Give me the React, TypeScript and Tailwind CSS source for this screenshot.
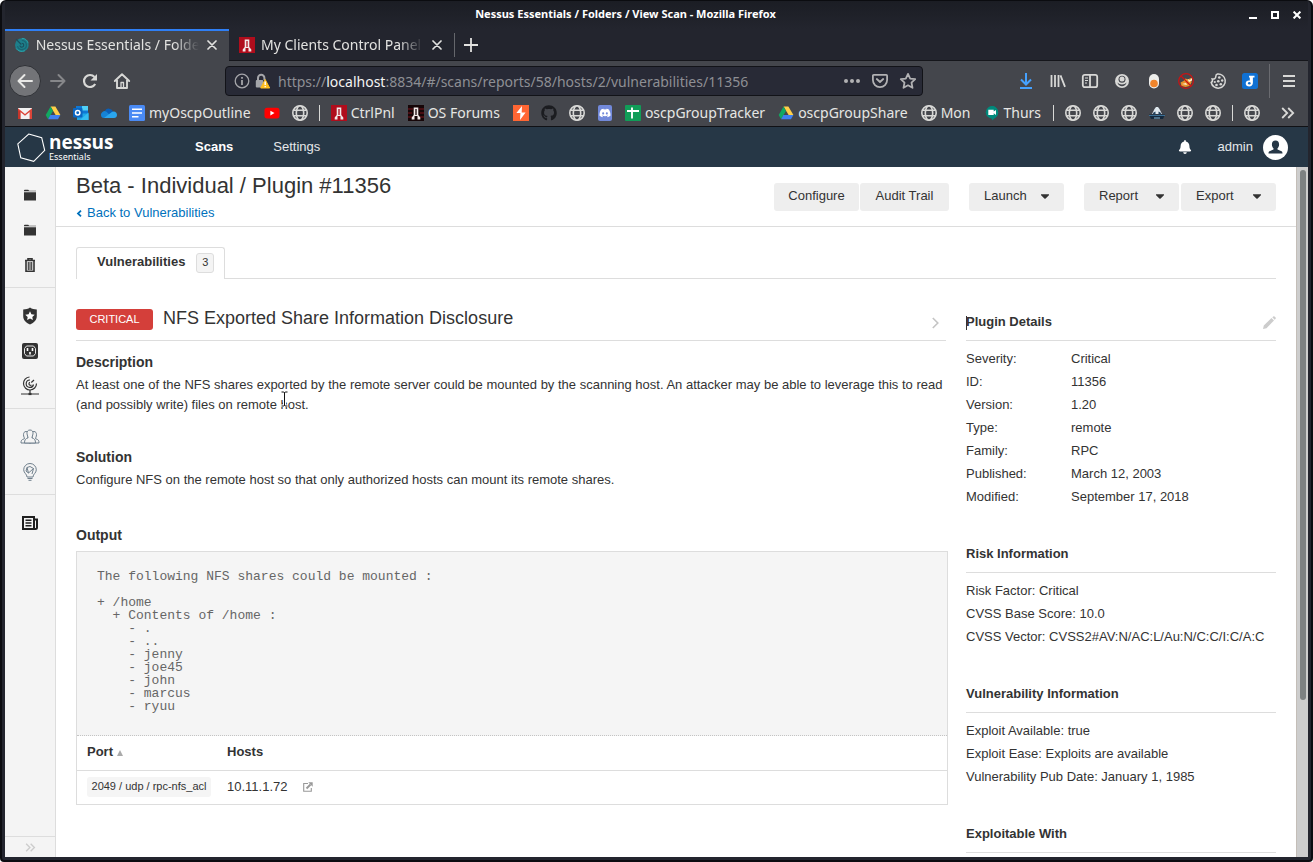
import React from "react";
import { FaCaretDown, FaGithub, FaDiscord, FaBell } from "react-icons/fa";

type IconProps = { className?: string };

/* ---------- browser icons ---------- */

const Globe = () => (
  <svg viewBox="0 0 16 16" className="size-4" fill="none" stroke="#d8d8d6" strokeWidth="1.6">
    <circle cx="8" cy="8" r="7.200" />
    <ellipse cx="8" cy="8" rx="3.700" ry="7.200" />
    <path d="M1.600 5.200h12.800M1.600 10.800h12.800" />
  </svg>
);

const Gmail = () => (
  <svg viewBox="0 0 16 16" className="size-4">
    <path d="M1 3h14v11H1z" fill="#f2f2f2" />
    <path d="M1 14V3.200L8 9l7-5.800V14h-2.400V7L8 10.800 3.400 7v7z" fill="#dc4539" />
    <path d="M3.400 14V7L1 5v9z" fill="#c5352b" />
  </svg>
);

const Drive = () => (
  <svg viewBox="0 0 16 16" className="size-4">
    <path d="M5.600 1.600h4.800l5 8.300h-4.800z" fill="#ffcf48" />
    <path d="M5.600 1.600L.7 9.900l2.400 4.300L8 5.900z" fill="#11a861" />
    <path d="M5.400 9.900h10l-2.400 4.300H3.100z" fill="#3f80ee" />
  </svg>
);

const Outlook = () => (
  <svg viewBox="0 0 16 16" className="size-4">
    <path d="M3 1h12v9H3z" fill="#0f78d4" />
    <path d="M9 1h6v4.500H9z" fill="#50d0f7" />
    <path d="M4 8.500h11.500V15H4z" fill="#1fa7e8" />
    <path d="M15.500 7.500V15H7z" fill="#33bdf2" />
    <rect x="0" y="3" width="9.500" height="9.500" rx="1" fill="#0a66c2" />
    <circle cx="4.700" cy="7.800" r="2.200" fill="none" stroke="#fff" strokeWidth="1.500" />
  </svg>
);

const OneDrive = () => (
  <svg viewBox="0 0 16 16" className="size-4">
    <path d="M3.800 6a4.600 4.600 0 0 1 8.400.8L8 10z" fill="#0a5fb8" />
    <path d="M0 10a3.600 3.600 0 0 1 5.500-3.300L12 13H3.300A3.100 3.100 0 0 1 0 10z" fill="#1583d6" />
    <path d="M3 13l7.500-5.800A3.400 3.400 0 0 1 16 10c0 1.800-1.300 3-3 3z" fill="#2aa6ee" />
  </svg>
);

const Docs = () => (
  <svg viewBox="0 0 16 16" className="size-4">
    <rect width="16" height="16" rx="1.500" fill="#4a8af4" />
    <path d="M3 4.200h10M3 8h10M3 11.800h6.500" stroke="#fff" strokeWidth="1.600" />
  </svg>
);

const YouTube = () => (
  <svg viewBox="0 0 16 16" className="size-4">
    <rect x="0.500" y="2.800" width="15" height="10.600" rx="2.600" fill="#f00" />
    <path d="M6.400 5.700v4.800L10.500 8.100z" fill="#fff" />
  </svg>
);

const Tower = ({ dark }: { dark?: boolean }) => (
  <svg viewBox="0 0 16 16" className="size-4">
    <rect width="16" height="16" fill={dark ? "#160608" : "#b00d1c"} />
    {dark && <path d="M0 4h5M11 4h5M0 8h4M12 8h4M0 12h4M12 12h4" stroke="#5a1016" strokeWidth="1.500" />}
    <path d="M5.700 2.500h4.600v7.500l2 2.500v2H9.500v-3.500h-3v3.500H3.700v-2l2-2.500z" fill="#f3eaea" />
    <path d="M8 4v6" stroke={dark ? "#160608" : "#b00d1c"} strokeWidth="1.300" />
  </svg>
);

const Burp = () => (
  <svg viewBox="0 0 16 16" className="size-4">
    <rect width="16" height="16" fill="#ff6633" />
    <path d="M9 1L3.400 8h4L7 15l5.600-7.500H8.700z" fill="#fff" />
  </svg>
);

const Sheets = () => (
  <svg viewBox="0 0 16 16" className="size-4">
    <rect width="16" height="16" rx="1" fill="#109d58" />
    <path d="M2 6h12M7 2.500v11" stroke="#fff" strokeWidth="1.900" />
  </svg>
);

const Discord = () => (
  <span className="flex size-4 items-center justify-center">
    <span className="flex h-4 w-3.5 items-center justify-center rounded-xs bg-[#7289da]">
      <FaDiscord className="size-3 text-white" />
    </span>
  </span>
);

const Meet = () => (
  <svg viewBox="0 0 16 16" className="size-4">
    <path d="M8 1a6.500 6.500 0 0 1 6.200 6.600c0 3.500-3 5.400-6.200 7.900v-2A6.400 6.400 0 0 1 8 1z" fill="#00897b" />
    <circle cx="8" cy="7.300" r="6.200" fill="#00897b" />
    <path d="M4.300 4.800h5.400v1.700L12 4.900v5L9.700 8.300V10H4.300z" fill="#fff" />
  </svg>
);

const Station = () => (
  <svg viewBox="0 0 16 16" className="size-4">
    <path d="M0 9.500h16l-2 4.500H2z" fill="#15293d" />
    <path d="M5.500 4l1.500-2h2l1.500 2 2.500 5H3z" fill="#dfe8ee" />
    <path d="M4.500 7.500l2-1v3h-3zM11.500 7.500l-2-1v3h3z" fill="#23415c" />
    <path d="M0 10.500h16" stroke="#3c6f94" strokeWidth="1.200" />
    <path d="M5 13h6" stroke="#86b7d4" />
  </svg>
);

const CloseX = ({ className }: IconProps) => (
  <svg viewBox="0 0 10 10" className={className} fill="none" stroke="currentColor" strokeWidth="1.700" strokeLinecap="round">
    <path d="M1 1l8 8M9 1L1 9" />
  </svg>
);

const Chevrons = ({ className }: IconProps) => (
  <svg viewBox="0 0 14 12" className={className} fill="none" stroke="currentColor" strokeWidth="1.800">
    <path d="M1.200 1l5 5-5 5M7.200 1l5 5-5 5" />
  </svg>
);

const Swirl = () => (
  <svg viewBox="0 0 16 16" className="size-4" fill="none">
    <circle cx="8" cy="8" r="7" fill="#1d7f8b" />
    <path d="M8 3.400a4.600 4.600 0 1 1-4.400 5.800" stroke="#1a6472" strokeWidth="1.200" />
    <path d="M7.500 7.500L2 2M6 8.500a2 2 0 1 0 2-2.300" stroke="#1b4f5d" strokeWidth="1.200" />
    <path d="M2.200 11.500a6.800 6.800 0 0 0 9 2.300M8 1.200a6.800 6.800 0 0 1 6.500 5" stroke="#29a3a9" strokeWidth="1" />
  </svg>
);

/* ---------- browser chrome ---------- */

function TitleBar() {
  return (
    <header className="relative flex h-[28px] shrink-0 items-center justify-center bg-linear-to-b from-[#1b1d24] to-[#23252e]">
      <h1 className="mr-[62px] pb-[2px] text-[11px] font-bold leading-4 text-white">
        Nessus Essentials / Folders / View Scan - Mozilla Firefox
      </h1>
      <div className="absolute right-[3px] top-0 flex h-full items-center gap-[6px] text-white">
        <button aria-label="Minimize" className="flex size-4 items-center justify-center">
          <svg viewBox="0 0 8 8" className="size-2"><path d="M0 6h8v2H0z" fill="currentColor" /></svg>
        </button>
        <button aria-label="Maximize" className="flex size-4 items-center justify-center">
          <svg viewBox="0 0 8 8" className="size-2"><path d="M1 1h6v6H1z" fill="none" stroke="currentColor" strokeWidth="2" /></svg>
        </button>
        <button aria-label="Close" className="flex size-4 items-center justify-center">
          <svg viewBox="0 0 8 8" className="size-2"><path d="M.6.6l6.800 6.800M7.400.6L.6 7.400" stroke="currentColor" strokeWidth="2" /></svg>
        </button>
      </div>
    </header>
  );
}

function TabStrip() {
  return (
    <div className="flex h-8 shrink-0 bg-[#23252e] text-[14px] leading-5 text-[#e2e2e0]">
      <div className="flex w-[224px] items-center border-t-2 border-[#2f7ff5] bg-[#44464c] pb-[2px] pl-[9px] pr-3">
        <Swirl />
        <span className="ml-[6px] w-[167px] overflow-hidden whitespace-nowrap mask-r-from-85%">
          Nessus Essentials / Folders
        </span>
        <button aria-label="Close tab" className="ml-2"><CloseX className="size-[10px]" /></button>
      </div>
      <div className="flex w-[225px] items-center border-b border-[#15161b] pl-[10px] pr-2">
        <Tower />
        <span className="ml-[6px] w-[162px] overflow-hidden whitespace-nowrap mask-r-from-85%">
          My Clients Control Panel
        </span>
        <button aria-label="Close tab" className="ml-[9px]"><CloseX className="size-[10px]" /></button>
      </div>
      <div className="flex flex-1 items-center border-b border-[#15161b]">
        <div className="h-6 w-px bg-[#65676c]" />
        <button aria-label="New tab" className="ml-[9px]">
          <svg viewBox="0 0 14 14" className="size-[14px]"><path d="M7 0v14M0 7h14" stroke="currentColor" strokeWidth="1.800" /></svg>
        </button>
      </div>
    </div>
  );
}

const navIcon = "size-4 overflow-visible";

function NavBar() {
  const tools: [string, React.ReactNode][] = [
    ["Downloads", (
      <svg viewBox="0 0 16 16" className={navIcon} fill="none" stroke="#45a1ff" strokeWidth="2">
        <path d="M8 0v11M3 6.500l5 5 5-5M2 15h12" />
      </svg>
    )],
    ["Library", (
      <svg viewBox="0 0 16 16" className={navIcon} fill="none" stroke="currentColor" strokeWidth="1.800">
        <path d="M1.500 2v12M5 2v12M8.500 2v12M10.500 2.400l4.500 11.400" />
      </svg>
    )],
    ["Sidebars", (
      <svg viewBox="0 0 16 16" className={navIcon} fill="none" stroke="currentColor" strokeWidth="1.800">
        <rect x="0.800" y="1.800" width="14.400" height="12.400" rx="2" />
        <path d="M8 2v12" /><path d="M3 5h3M3 7.500h3M3 10h2" strokeWidth="1.200" />
      </svg>
    )],
    ["Account", (
      <svg viewBox="0 0 16 16" className={navIcon}>
        <circle cx="8" cy="8" r="7" fill="currentColor" />
        <circle cx="8" cy="6.200" r="3.500" fill="#44464c" />
        <circle cx="8" cy="6" r="2.500" fill="currentColor" />
        <path d="M3.400 9.600c1.200 1.300 2.600 1.900 4.600 1.900s3.400-.6 4.600-1.900c-.8 2.500-2.500 3.700-4.600 3.700s-3.800-1.200-4.600-3.700z" fill="#44464c" />
      </svg>
    )],
    ["Proxy", (
      <svg viewBox="0 0 16 16" className={navIcon}>
        <rect x="3" y="1" width="10" height="14.500" rx="5" fill="#ededeb" />
        <circle cx="8" cy="10.500" r="3.800" fill="#f0852c" />
      </svg>
    )],
    ["Fox blocker", (
      <svg viewBox="0 0 16 16" className={navIcon}>
        <path d="M2.500 9.500l3-1.500 2-2.500 2.500 1 3.500-2v5l-2 3.500-4 1-4-1z" fill="#e8912b" />
        <path d="M9.500 6l2.500 1 2-2v2.500l-3 1.500zM4 11l4-1 1 2z" fill="#fff2d8" />
        <circle cx="8" cy="8" r="7.300" fill="none" stroke="#c81414" strokeWidth="1.300" />
        <path d="M3 3l10 10" stroke="#c81414" strokeWidth="1.300" />
      </svg>
    )],
    ["Cookies", (
      <svg viewBox="0 0 16 16" className={navIcon} fill="none" stroke="currentColor" strokeWidth="1.500">
        <path d="M7.500 1A7.100 7.100 0 1 1 1.200 9.500c1.500-.8 1.600-2 1-3.500 2 .3 3.600-.5 3.600-2.500 0-1 .5-2.200 1.700-2.500z" />
        <g fill="currentColor" stroke="none">
          <circle cx="4.800" cy="9" r="1.100" /><circle cx="9.300" cy="4.500" r="1.300" /><circle cx="12.200" cy="7.500" r="1.200" />
          <circle cx="8.300" cy="8.300" r="1.300" /><circle cx="6.500" cy="12" r="1.300" /><circle cx="10.800" cy="11.300" r="1.300" />
        </g>
      </svg>
    )],
    ["Joplin", (
      <svg viewBox="0 0 16 16" className={navIcon}>
        <rect width="16" height="16" rx="2.500" fill="#1071d3" />
        <path d="M7 2.700h5.500v1.800h-1.600v5.200c0 2.400-1.500 3.700-3.700 3.700-2.100 0-3.500-1.200-3.500-3 0-2.200 1.900-3.300 4.100-2.800V4.500H7z" fill="#fff" />
        <circle cx="7.300" cy="10.300" r="1.300" fill="#1071d3" />
      </svg>
    )],
  ];
  return (
    <div className="flex h-10 shrink-0 items-center bg-[#44464c] pl-1 pr-[3px] text-[#d8d8d6]">
      <button aria-label="Back" className="mr-px flex size-8 items-center justify-center rounded-full border border-[#2f3136] bg-[#737478] text-[#e8e8e6]">
        <svg viewBox="0 0 16 16" className={navIcon} fill="none" stroke="currentColor" strokeWidth="2" strokeLinecap="round" strokeLinejoin="round">
          <path d="M15 8H1.500M7.500 2l-6 6 6 6" />
        </svg>
      </button>
      <button aria-label="Forward" className="flex size-8 items-center justify-center text-[#86878a]">
        <svg viewBox="0 0 16 16" className={navIcon} fill="none" stroke="currentColor" strokeWidth="2" strokeLinecap="round" strokeLinejoin="round">
          <path d="M1 8h13.500M8.500 2l6 6-6 6" />
        </svg>
      </button>
      <button aria-label="Reload" className="flex size-8 items-center justify-center">
        <svg viewBox="0 0 16 16" className={navIcon} fill="none" stroke="currentColor" strokeWidth="2.200">
          <path d="M13.200 11A6 6 0 1 1 12.500 4" />
          <path d="M15 1v6.500H8.500z" fill="currentColor" stroke="none" />
        </svg>
      </button>
      <button aria-label="Home" className="flex size-8 items-center justify-center">
        <svg viewBox="0 0 16 16" className={navIcon} fill="none" stroke="currentColor" strokeWidth="1.900" strokeLinejoin="round">
          <path d="M.8 8L8 1.200 15.200 8M3 7v8h10V7" strokeLinecap="round" />
          <path d="M7 15V9.500h2.500V15" strokeWidth="1.300" />
        </svg>
      </button>
      <div className="mx-[87px] flex h-[30px] flex-1 items-center rounded-sm border border-[#121318] bg-[#282a36] px-2 text-[14px] text-[#8e8f94]">
        <svg viewBox="0 0 16 16" className="size-4 shrink-0" fill="none" stroke="#a4a5a9" strokeWidth="1.300">
          <circle cx="8" cy="8" r="6.800" /><path d="M8 7v5M8 4v1.800" strokeWidth="1.800" />
        </svg>
        <svg viewBox="0 0 16 16" className="ml-[5px] size-4 shrink-0 overflow-visible">
          <path d="M3 8V5a3.200 3.200 0 0 1 6.400 0v2" fill="none" stroke="#a4a5a9" strokeWidth="2" />
          <rect x="0.800" y="7" width="7.500" height="7.500" rx="1" fill="#a4a5a9" />
          <path d="M10.200 6.500l4.500 8.500h-9z" fill="#ffbf1f" stroke="#ffbf1f" strokeLinejoin="round" />
          <path d="M10.200 8.500v3.500M10.200 13v1.300" stroke="#fff" strokeWidth="1.400" />
        </svg>
        <p className="ml-[7px] flex-1 whitespace-nowrap">
          https://<span className="text-[#f4f4f2]">localhost</span>:8834/#/scans/reports/58/hosts/2/vulnerabilities/11356
        </p>
        <div className="flex items-center gap-3 text-[#b1b1b3]">
          <button aria-label="Page actions">
            <svg viewBox="0 0 16 16" className="size-4" fill="currentColor"><circle cx="2" cy="8" r="2" /><circle cx="8" cy="8" r="2" /><circle cx="14" cy="8" r="2" /></svg>
          </button>
          <button aria-label="Save to Pocket">
            <svg viewBox="0 0 16 16" className="size-4" fill="none" stroke="currentColor" strokeWidth="1.800" strokeLinecap="round" strokeLinejoin="round">
              <path d="M1.800 1.900h12.400c.6 0 .9.300.9.900V7a7.100 7.100 0 0 1-14.200 0V2.800c0-.6.3-.9.900-.9z" /><path d="M4.800 6L8 9l3.200-3" />
            </svg>
          </button>
          <button aria-label="Bookmark this page" className="-mr-[2px]">
            <svg viewBox="0 0 16 16" className="size-4 overflow-visible" fill="none" stroke="currentColor" strokeWidth="1.800" strokeLinejoin="round">
              <path d="M8 .9l2.200 4.700 5 .6-3.700 3.500 1 5.100L8 12.300l-4.500 2.500 1-5.100L.8 6.200l5-.6z" />
            </svg>
          </button>
        </div>
      </div>
      {tools.map(([label, icon]) => (
        <button key={label} aria-label={label} className="flex size-8 items-center justify-center">{icon}</button>
      ))}
      <div className="mx-[3px] h-[34px] w-px bg-[#6a6b70]" />
      <button aria-label="Open menu" className="flex size-8 items-center justify-center">
        <svg viewBox="0 0 16 16" className={navIcon} stroke="currentColor" strokeWidth="1.900"><path d="M2 3h12M2 8h12M2 13h12" /></svg>
      </button>
    </div>
  );
}

type Mark = { name: string; icon: React.ReactNode; text?: string } | "divider";

const bookmarks: Mark[] = [
  { name: "Gmail", icon: <Gmail /> },
  { name: "Drive", icon: <Drive /> },
  { name: "Outlook", icon: <Outlook /> },
  { name: "OneDrive", icon: <OneDrive /> },
  { name: "myOscpOutline", icon: <Docs />, text: "myOscpOutline" },
  { name: "YouTube", icon: <YouTube /> },
  { name: "Site", icon: <Globe /> },
  "divider",
  { name: "CtrlPnl", icon: <Tower />, text: "CtrlPnl" },
  { name: "OS Forums", icon: <Tower dark />, text: "OS Forums" },
  { name: "PortSwigger", icon: <Burp /> },
  { name: "GitHub", icon: <FaGithub className="size-4 text-[#1b1c20]" /> },
  { name: "Site", icon: <Globe /> },
  { name: "Discord", icon: <Discord /> },
  { name: "oscpGroupTracker", icon: <Sheets />, text: "oscpGroupTracker" },
  { name: "oscpGroupShare", icon: <Drive />, text: "oscpGroupShare" },
  { name: "Mon", icon: <Globe />, text: "Mon" },
  { name: "Thurs", icon: <Meet />, text: "Thurs" },
  "divider",
  { name: "Site", icon: <Globe /> },
  { name: "Site", icon: <Globe /> },
  { name: "Site", icon: <Globe /> },
  { name: "Station", icon: <Station /> },
  { name: "Site", icon: <Globe /> },
  { name: "Site", icon: <Globe /> },
  "divider",
  { name: "Site", icon: <Globe /> },
];

function BookmarksBar() {
  return (
    <nav className="flex h-[26px] shrink-0 items-center border-b border-[#101115] bg-[#44464c] pb-px pl-[6px] text-[14px] leading-5 text-[#e6e6e4]">
      {bookmarks.map((m, i) =>
        m === "divider" ? (
          <div key={i} className="mx-[5px] h-4 w-px shrink-0 bg-[#d8d8d6]" />
        ) : (
          <a key={i} href="#" aria-label={m.name} className={m.text ? "flex shrink-0 items-center gap-1 pl-[6px] pr-[7px]" : "flex shrink-0 px-[6px]"}>
            {m.icon}
            {m.text && <span className="whitespace-nowrap">{m.text}</span>}
          </a>
        )
      )}
      <button aria-label="More bookmarks" className="ml-auto mr-[13px] text-[#d8d8d6]">
        <Chevrons className="h-3 w-[14px]" />
      </button>
    </nav>
  );
}

/* ---------- application ---------- */

function AppHeader() {
  return (
    <header className="flex h-10 shrink-0 items-center bg-[#263746] pl-3 pr-5 text-[13px] text-[#e5e8ea]">
      <a href="#" className="flex w-[178px] items-center text-white">
        <svg viewBox="0 0 29 29" className="size-[29px]" fill="none" stroke="#fff" strokeWidth="1.100">
          <path d="M11.700 1l13 3.700 3 12.700-11 10.900-12.900-3.500L.8 10.900z" />
        </svg>
        <span className="ml-[3px] flex flex-col pt-px">
          <span className="font-['Open_Sans',sans-serif] text-[19px] font-bold leading-[18px]">nessus</span>
          <span className="font-['Noto_Sans',sans-serif] text-[9px] leading-3">Essentials</span>
        </span>
      </a>
      <a href="#" className="font-bold text-white">Scans</a>
      <a href="#" className="ml-10">Settings</a>
      <button aria-label="Notifications" className="ml-auto"><FaBell className="size-[14px] text-white" /></button>
      <button className="ml-[26px] flex items-center gap-[10px]">
        admin
        <svg viewBox="0 0 25 25" className="size-[25px]">
          <circle cx="12.500" cy="12.500" r="12.500" fill="#fff" />
          <path d="M12.500 5.500c2.300 0 3.600 1.600 3.600 3.900 0 1.800-.8 3-1.600 3.900v1.200l4 1.700c.7.300 1 1 1 2.300h-14c0-1.300.3-2 1-2.300l4-1.700v-1.200c-.8-.9-1.600-2.100-1.600-3.900 0-2.300 1.300-3.900 3.600-3.900z" fill="#263746" />
        </svg>
      </button>
    </header>
  );
}

const side = "size-[18px]";

const Folder = () => (
  <svg viewBox="0 0 18 18" className={side} fill="#333">
    <path d="M3 5V4.500C3 4 3.300 3.700 3.800 3.700h3.400l1 1H15V5.300H3zM3 6.200h12V14.600H3z" />
  </svg>
);

const sideGroups: [string, React.ReactNode][][] = [
  [
    ["My Scans", <Folder />],
    ["All Scans", <Folder />],
    ["Trash", (
      <svg viewBox="0 0 18 18" className={side} fill="none" stroke="#333" strokeWidth="1.600">
        <path d="M4 4.500h10M7 4V2.700h4V4M5 5v10.200h8V5" /><path d="M7.300 6v8M9 6v8M10.700 6v8" strokeWidth="1.100" />
      </svg>
    )],
  ],
  [
    ["Policies", (
      <svg viewBox="0 0 18 18" className={side}>
        <path d="M9 .5c2 1.400 4.200 1.900 6.800 2v6.600c0 4-2.600 6.800-6.800 8.500-4.200-1.700-6.800-4.500-6.800-8.500V2.500C4.800 2.400 7 1.900 9 .5z" fill="#333" />
        <path d="M9 4.300l1.400 3 3.300.4-2.400 2.200.6 3.200L9 11.500l-2.900 1.600.6-3.200-2.400-2.200 3.300-.4z" fill="#fff" />
      </svg>
    )],
    ["Plugin Rules", (
      <svg viewBox="0 0 18 18" className={side}>
        <rect x="1" y="1" width="16" height="16" rx="2" fill="#333" />
        <path d="M5.500 4h7l2 2.500v5l-2 2.500h-7l-2-2.500v-5z" fill="none" stroke="#e8e8e8" strokeWidth="1" />
        <path d="M6.500 6v3M11.500 6v3M9 10v2.500" stroke="#fff" strokeWidth="1.600" />
      </svg>
    )],
    ["Scanners", (
      <svg viewBox="0 0 18 18" className="size-[18px] overflow-visible" fill="none" stroke="#333" strokeWidth="1.200">
        <path d="M8.500 0a6.500 6.500 0 1 0 7 6.500M9 3a3.700 3.700 0 1 0 3.500 4.500" />
        <path d="M9 5.200A1.600 1.600 0 1 0 10.500 8M10.300 5.500L13 3" />
        <path d="M9 13v4M0 17h18" /><path d="M7.500 17h3" strokeWidth="2.200" />
      </svg>
    )],
  ],
  [
    ["Community", (
      <svg viewBox="0 0 18 18" className="size-[18px] overflow-visible" fill="#f4f4f4" stroke="#6f7f8c" strokeWidth="1">
        <path d="M5 3.500c2 0 2.800 1.500 2.600 3.200-.2 1.500-.8 2.300-.8 3.300l3 2v3H0c0-2.500.4-3.300 3.500-4.300 0-1-1-2-1-4 0-1.900.9-3.200 2.500-3.200z" />
        <path d="M13 3.500c-2 0-2.800 1.500-2.600 3.200.2 1.500.8 2.300.8 3.300l-3 2v3H18c0-2.500-.4-3.300-3.500-4.300 0-1 1-2 1-4 0-1.900-.9-3.200-2.500-3.200z" />
        <path d="M9 2c2.300 0 3.200 1.700 3 3.900-.1 1.800-1.100 2.500-1.100 3.900 2.800 1 3.600 2.200 3.600 5.200h-11c0-3 .8-4.200 3.600-5.200C7.100 8.400 6.100 7.700 6 5.900 5.800 3.700 6.700 2 9 2z" />
      </svg>
    )],
    ["Research", (
      <svg viewBox="0 0 18 18" className="size-[18px] overflow-visible" fill="none" stroke="#6f7f8c" strokeWidth="1">
        <path d="M9 .5a6.300 6.300 0 0 1 6.300 6.300c0 3.300-3.300 4.200-3.300 7.200H6c0-3-3.300-3.900-3.300-7.200A6.300 6.300 0 0 1 9 .5z" />
        <path d="M6.500 15.500h5M7.500 17.300h3M6 4.500l3-1 3.500 2-5 4.500zM6 4.500L5 8l2.500 2M12.500 5.500L11 11" />
      </svg>
    )],
  ],
  [
    ["News", (
      <svg viewBox="0 0 18 18" className={side} fill="none" stroke="#1f1f1f" strokeWidth="2">
        <path d="M2 3h11v12H2zM13.500 5.500H16v8c0 1-.5 1.500-1.500 1.500H3" /><path d="M4.500 6.200h6M4.500 9h6M4.500 11.800h6" strokeWidth="1.600" />
      </svg>
    )],
  ],
];

function Sidebar() {
  return (
    <aside className="flex w-[51px] shrink-0 flex-col border-r border-[#dddddd] bg-[#f4f4f4]">
      {sideGroups.map((g, i) => (
        <div key={i} className={i < 3 ? "border-b border-[#dddddd] pb-[5px] pt-[10px]" : "pt-[10px]"}>
          {g.map(([label, icon]) => (
            <a key={label} href="#" aria-label={label} className="flex h-[35px] items-center justify-center">{icon}</a>
          ))}
        </div>
      ))}
      <button aria-label="Expand" className="mt-auto flex h-[21px] items-center justify-center border-t border-[#dddddd] text-[#cccccc]">
        <Chevrons className="h-[9px] w-[11px]" />
      </button>
    </aside>
  );
}

const btn = "flex h-7 items-center rounded-[3px] bg-[#eeeeee] pb-[2px] text-[#333]";

function MenuButton({ label }: { label: string }) {
  return (
    <button className={`${btn} w-[95px] justify-between pl-[15px] pr-3`}>
      {label}
      <FaCaretDown className="size-[14px]" />
    </button>
  );
}

function PageHeader() {
  return (
    <div className="flex h-[60px] shrink-0 justify-between border-b border-[#dddddd] px-5">
      <div className="pt-[7px]">
        <h2 className="text-[22px] leading-6">Beta - Individual / Plugin #11356</h2>
        <a href="#" className="mt-[6px] flex items-center text-[#0071bc] leading-[18px]">
          <svg viewBox="0 0 6 7" className="mr-[5px] mt-px h-[7px] w-[6px]" fill="none" stroke="currentColor" strokeWidth="1.800"><path d="M5 .7L2 3.500l3 2.800" /></svg>
          Back to Vulnerabilities
        </a>
      </div>
      <div className="flex pt-4">
        <button className={`${btn} w-[85px] justify-center`}>Configure</button>
        <button className={`${btn} ml-px w-[89px] justify-center`}>Audit Trail</button>
        <div className="mx-5"><MenuButton label="Launch" /></div>
        <div className="flex gap-[2px]"><MenuButton label="Report" /><MenuButton label="Export" /></div>
      </div>
    </div>
  );
}

const output = `The following NFS shares could be mounted :

+ /home
  + Contents of /home :
    - .
    - ..
    - jenny
    - joe45
    - john
    - marcus
    - ryuu`;

function Finding() {
  return (
    <main className="min-w-0 flex-1">
      <div className="mr-[2px] flex h-8 items-start border-b border-[#dddddd]">
        <span className="flex h-[21px] w-[77px] items-center justify-center rounded-[3px] bg-[#d43f3a] pb-px text-[11px] leading-5 text-white">CRITICAL</span>
        <h3 className="ml-[10px] text-[18px] leading-[19px]">NFS Exported Share Information Disclosure</h3>
        <button aria-label="Next vulnerability" className="ml-auto mr-[7px] mt-2">
          <svg viewBox="0 0 7 12" className="h-3 w-[7px]" fill="none" stroke="#c4c4c4" strokeWidth="1.600"><path d="M.8 1l5 5-5 5" /></svg>
        </button>
      </div>
      <h4 className="mt-[11px] text-[14px] font-bold leading-5">Description</h4>
      <div className="relative mt-[3px]">
        <p className="leading-5">
          At least one of the NFS shares exported by the remote server could be mounted by the scanning host. An attacker may be able to leverage this to read (and possibly write) files on remote host.
        </p>
        <svg viewBox="0 0 7 16" className="absolute left-[205px] top-4 h-4 w-[7px]" fill="none">
          <path d="M0 1h7M0 15h7M3.500 1v14" stroke="#fff" strokeWidth="3" />
          <path d="M.5 1h2.300l.7.800.7-.8h2.300M.5 15h2.300l.7-.8.7.8h2.300M3.500 1.500v13" stroke="#111" strokeWidth="1" />
        </svg>
      </div>
      <h4 className="mt-8 text-[14px] font-bold leading-5">Solution</h4>
      <p className="mt-[3px] leading-5">
        Configure NFS on the remote host so that only authorized hosts can mount its remote shares.
      </p>
      <h4 className="mt-[35px] text-[14px] font-bold leading-5">Output</h4>
      <div className="mt-[6px] border border-[#dddddd]">
        <pre className="border-b border-dotted border-[#c4c4c4] bg-[#f5f5f5] pb-[22px] pl-5 pt-[18px] font-['Liberation_Mono',monospace] text-[13px] leading-[13px] text-[#666]">
          {output}
        </pre>
        <table className="w-full table-fixed border-collapse text-left">
          <colgroup><col className="w-[140px]" /><col /></colgroup>
          <thead>
            <tr className="h-[34px] border-b border-[#dddddd]">
              <th className="pb-px pl-[10px]">
                <span className="flex items-center gap-[4px]">
                  Port
                  <svg viewBox="0 0 6 6" className="mt-[2px] size-[6px]"><path d="M3 0l3 6H0z" fill="#aaa" /></svg>
                </span>
              </th>
              <th className="pb-px pl-[10px]">Hosts</th>
            </tr>
          </thead>
          <tbody>
            <tr className="h-[34px]">
              <td className="pb-px pl-[10px]">
                <span className="flex h-5 w-[124px] items-center justify-center rounded-[3px] bg-[#f5f5f5] pb-px text-[11px] whitespace-nowrap">2049 / udp / rpc-nfs_acl</span>
              </td>
              <td className="pb-px pl-[10px]">
                <span className="flex items-center gap-4">
                  <a href="#">10.11.1.72</a>
                  <a href="#" aria-label="Open host">
                    <svg viewBox="0 0 10 10" className="size-[10px]" fill="none" stroke="#999" strokeWidth="1.100">
                      <path d="M5 1.500H.7v7.800h7.600V6" /><path d="M5.300.3h4.400v4.400z" fill="#999" stroke="none" /><path d="M3.500 6.500L7.500 2.500" strokeWidth="1.900" />
                    </svg>
                  </a>
                </span>
              </td>
            </tr>
          </tbody>
        </table>
      </div>
    </main>
  );
}

const sectionHead = "flex items-start justify-between border-b border-[#dddddd] pb-2 font-bold leading-5";

const details: [string, string][] = [
  ["Severity:", "Critical"],
  ["ID:", "11356"],
  ["Version:", "1.20"],
  ["Type:", "remote"],
  ["Family:", "RPC"],
  ["Published:", "March 12, 2003"],
  ["Modified:", "September 17, 2018"],
];

const sections = [
  { title: "Risk Information", rows: ["Risk Factor: Critical", "CVSS Base Score: 10.0", "CVSS Vector: CVSS2#AV:N/AC:L/Au:N/C:C/I:C/A:C"] },
  { title: "Vulnerability Information", rows: ["Exploit Available: true", "Exploit Ease: Exploits are available", "Vulnerability Pub Date: January 1, 1985"] },
  { title: "Exploitable With", rows: [] },
];

function Details() {
  return (
    <aside className="w-[310px] shrink-0 pt-[3px]">
      <div className={`${sectionHead} relative`}>
        <div className="absolute left-0 top-1 h-[14px] w-px bg-[#333]" />
        <h4>Plugin Details</h4>
        <button aria-label="Edit" className="mt-1">
          <svg viewBox="0 0 14 14" className="size-[14px]" fill="#ccc"><path d="M1 13l.8-3.500L9.500 2l2.500 2.500-7.500 7.700zM10.300 1.300l1-.9c.4-.3.800-.3 1.200 0l1.100 1.200c.3.400.3.800 0 1.100l-.9 1z" /></svg>
        </button>
      </div>
      <dl className="grid grid-cols-[105px_1fr] pt-[6px] leading-[23px]">
        {details.map(([k, v]) => (
          <React.Fragment key={k}><dt>{k}</dt><dd>{v}</dd></React.Fragment>
        ))}
      </dl>
      {sections.map((s) => (
        <section key={s.title} className="mt-9">
          <div className={sectionHead}><h4>{s.title}</h4></div>
          <div className="pt-[6px] leading-[23px]">
            {s.rows.map((r) => <p key={r} className="whitespace-nowrap">{r}</p>)}
          </div>
        </section>
      ))}
    </aside>
  );
}

export default function App() {
  return (
    <div className="h-screen bg-white">
      <div className="flex h-full flex-col overflow-hidden rounded-t-md rounded-b-sm border-2 border-t border-[#0b0c10] bg-[#23252e] px-[3px] pb-[3px] font-['Noto_Sans',sans-serif]">
        <TitleBar />
        <TabStrip />
        <NavBar />
        <BookmarksBar />
        <div className="flex min-h-0 flex-1 flex-col bg-white font-['Liberation_Sans',sans-serif] text-[13px] leading-5 text-[#333]">
          <AppHeader />
          <div className="flex min-h-0 flex-1">
            <Sidebar />
            <div className="flex min-w-0 flex-1 flex-col overflow-hidden">
              <PageHeader />
              <div className="min-h-0 flex-1 overflow-hidden px-5 pt-5">
                <div className="flex border-b border-[#dddddd]">
                  <a href="#" className="-mb-px flex h-8 w-[149px] items-start rounded-t-[3px] border border-b-0 border-[#dddddd] bg-white pl-5 pt-[5px] font-bold leading-[18px]">
                    Vulnerabilities
                    <span className="ml-[11px] flex h-5 w-[18px] items-center justify-center rounded-[3px] border border-[#dddddd] bg-[#f4f4f4] pb-[2px] text-[11px] font-normal">3</span>
                  </a>
                </div>
                <div className="flex gap-[18px] pt-[30px]">
                  <Finding />
                  <Details />
                </div>
              </div>
            </div>
            <div className="w-3 shrink-0 border-l border-[#c4beb8] bg-[#cdcdcd] px-[2px] pt-[3px]">
              <div className="ml-auto h-[530px] w-[6px] rounded-full bg-[#7d8182]" />
            </div>
          </div>
        </div>
      </div>
    </div>
  );
}
